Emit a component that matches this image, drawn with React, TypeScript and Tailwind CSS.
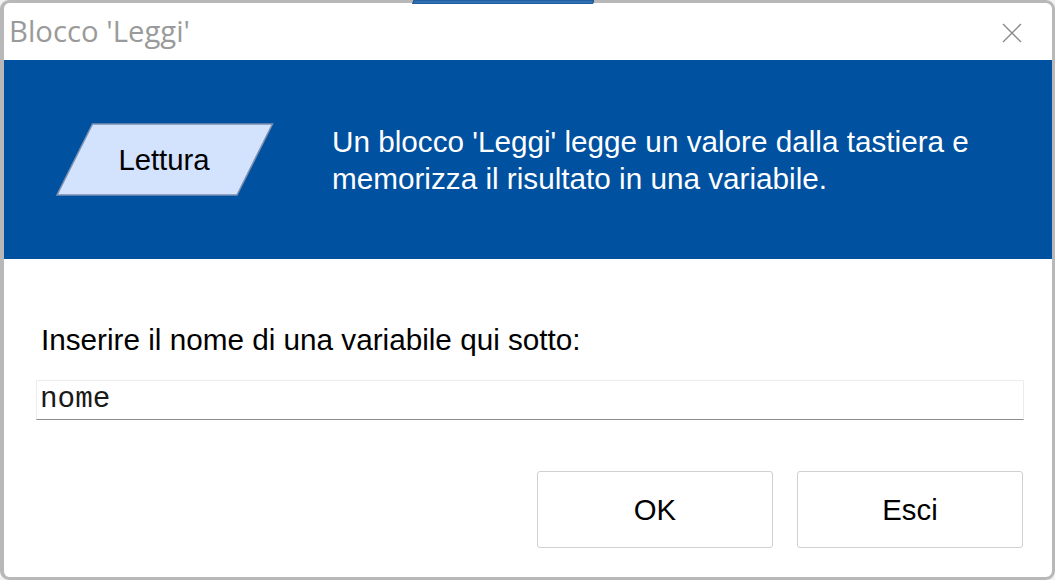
import React from "react";

export default function App() {
  return (
    <div className="relative w-[1055px] h-[580px] bg-[#f2f2f2] overflow-hidden">
      <div className="absolute left-[412px] top-0 w-[182px] h-[4px] z-10">
        <svg width="182" height="4" viewBox="0 0 182 4">
          <polygon points="2,0 182,0 180.5,4 0.5,4" fill="#2f6fb4" stroke="#1d4f8a" strokeWidth="1" />
        </svg>
      </div>
      <div className="w-full h-full flex flex-col bg-white border-t-[3px] border-l-[4px] border-r-[3px] border-b-[3px] border-[#b8b8b8] rounded-[9px] overflow-hidden">
        {/* Title bar */}
        <div className="h-[57px] flex items-center justify-between pl-[5px] pr-[30px] shrink-0">
          <span
            className="text-[29.3px] text-[#9a9a9a] leading-none"
            style={{ fontFamily: '"Open Sans", "Noto Sans", sans-serif' }}
          >
            Blocco 'Leggi'
          </span>
          <svg width="20" height="20" viewBox="0 0 20 20" className="mt-[2px]">
            <path d="M1 1 L19 19 M19 1 L1 19" stroke="#8a8a8a" strokeWidth="1.4" fill="none" />
          </svg>
        </div>
        {/* Blue header */}
        <div className="h-[199px] bg-[#0051a0] flex items-center shrink-0 pl-[52px]">
          <svg width="218" height="73" viewBox="0 0 218 73" className="shrink-0">
            <polygon
              points="36.5,1 216.5,1 181,72 1,72"
              fill="#d3e2fd"
              stroke="#7b8eae"
              strokeWidth="1.5"
            />
            <text
              x="108"
              y="47"
              textAnchor="middle"
              fontSize="29.3"
              fill="#000"
              style={{ fontFamily: '"Liberation Sans", Arial, sans-serif' }}
            >
              Lettura
            </text>
          </svg>
          <div
            className="ml-[58px] text-white text-[29.7px] leading-[37px]"
            style={{ fontFamily: '"Liberation Sans", Arial, sans-serif' }}
          >
            <div>Un blocco 'Leggi' legge un valore dalla tastiera e</div>
            <div>memorizza il risultato in una variabile.</div>
          </div>
        </div>
        {/* Content */}
        <div
          className="flex-1 flex flex-col pl-[32px] pr-[28px] pt-[66px]"
          style={{ fontFamily: '"Liberation Sans", Arial, sans-serif' }}
        >
          <div className="ml-[5px] text-[29.7px] leading-[30px] text-black">
            Inserire il nome di una variabile qui sotto:
          </div>
          <div className="mt-[25px] h-[40px] border border-[#ececec] border-b-[#8c8c8c] flex items-center pl-[3px]">
            <span
              className="text-[29.3px] text-[#1a1a1a] leading-none"
              style={{ fontFamily: '"Liberation Mono", "Courier New", monospace' }}
            >
              nome
            </span>
          </div>
          <div className="mt-[51px] flex justify-end gap-[24px] pr-[1px]">
            <button className="w-[236px] h-[77px] border border-[#d0d0d0] rounded-[3px] bg-white text-[29.3px] text-black">
              OK
            </button>
            <button className="w-[226px] h-[77px] border border-[#d0d0d0] rounded-[3px] bg-white text-[29.3px] text-black">
              Esci
            </button>
          </div>
        </div>
      </div>
    </div>
  );
}
